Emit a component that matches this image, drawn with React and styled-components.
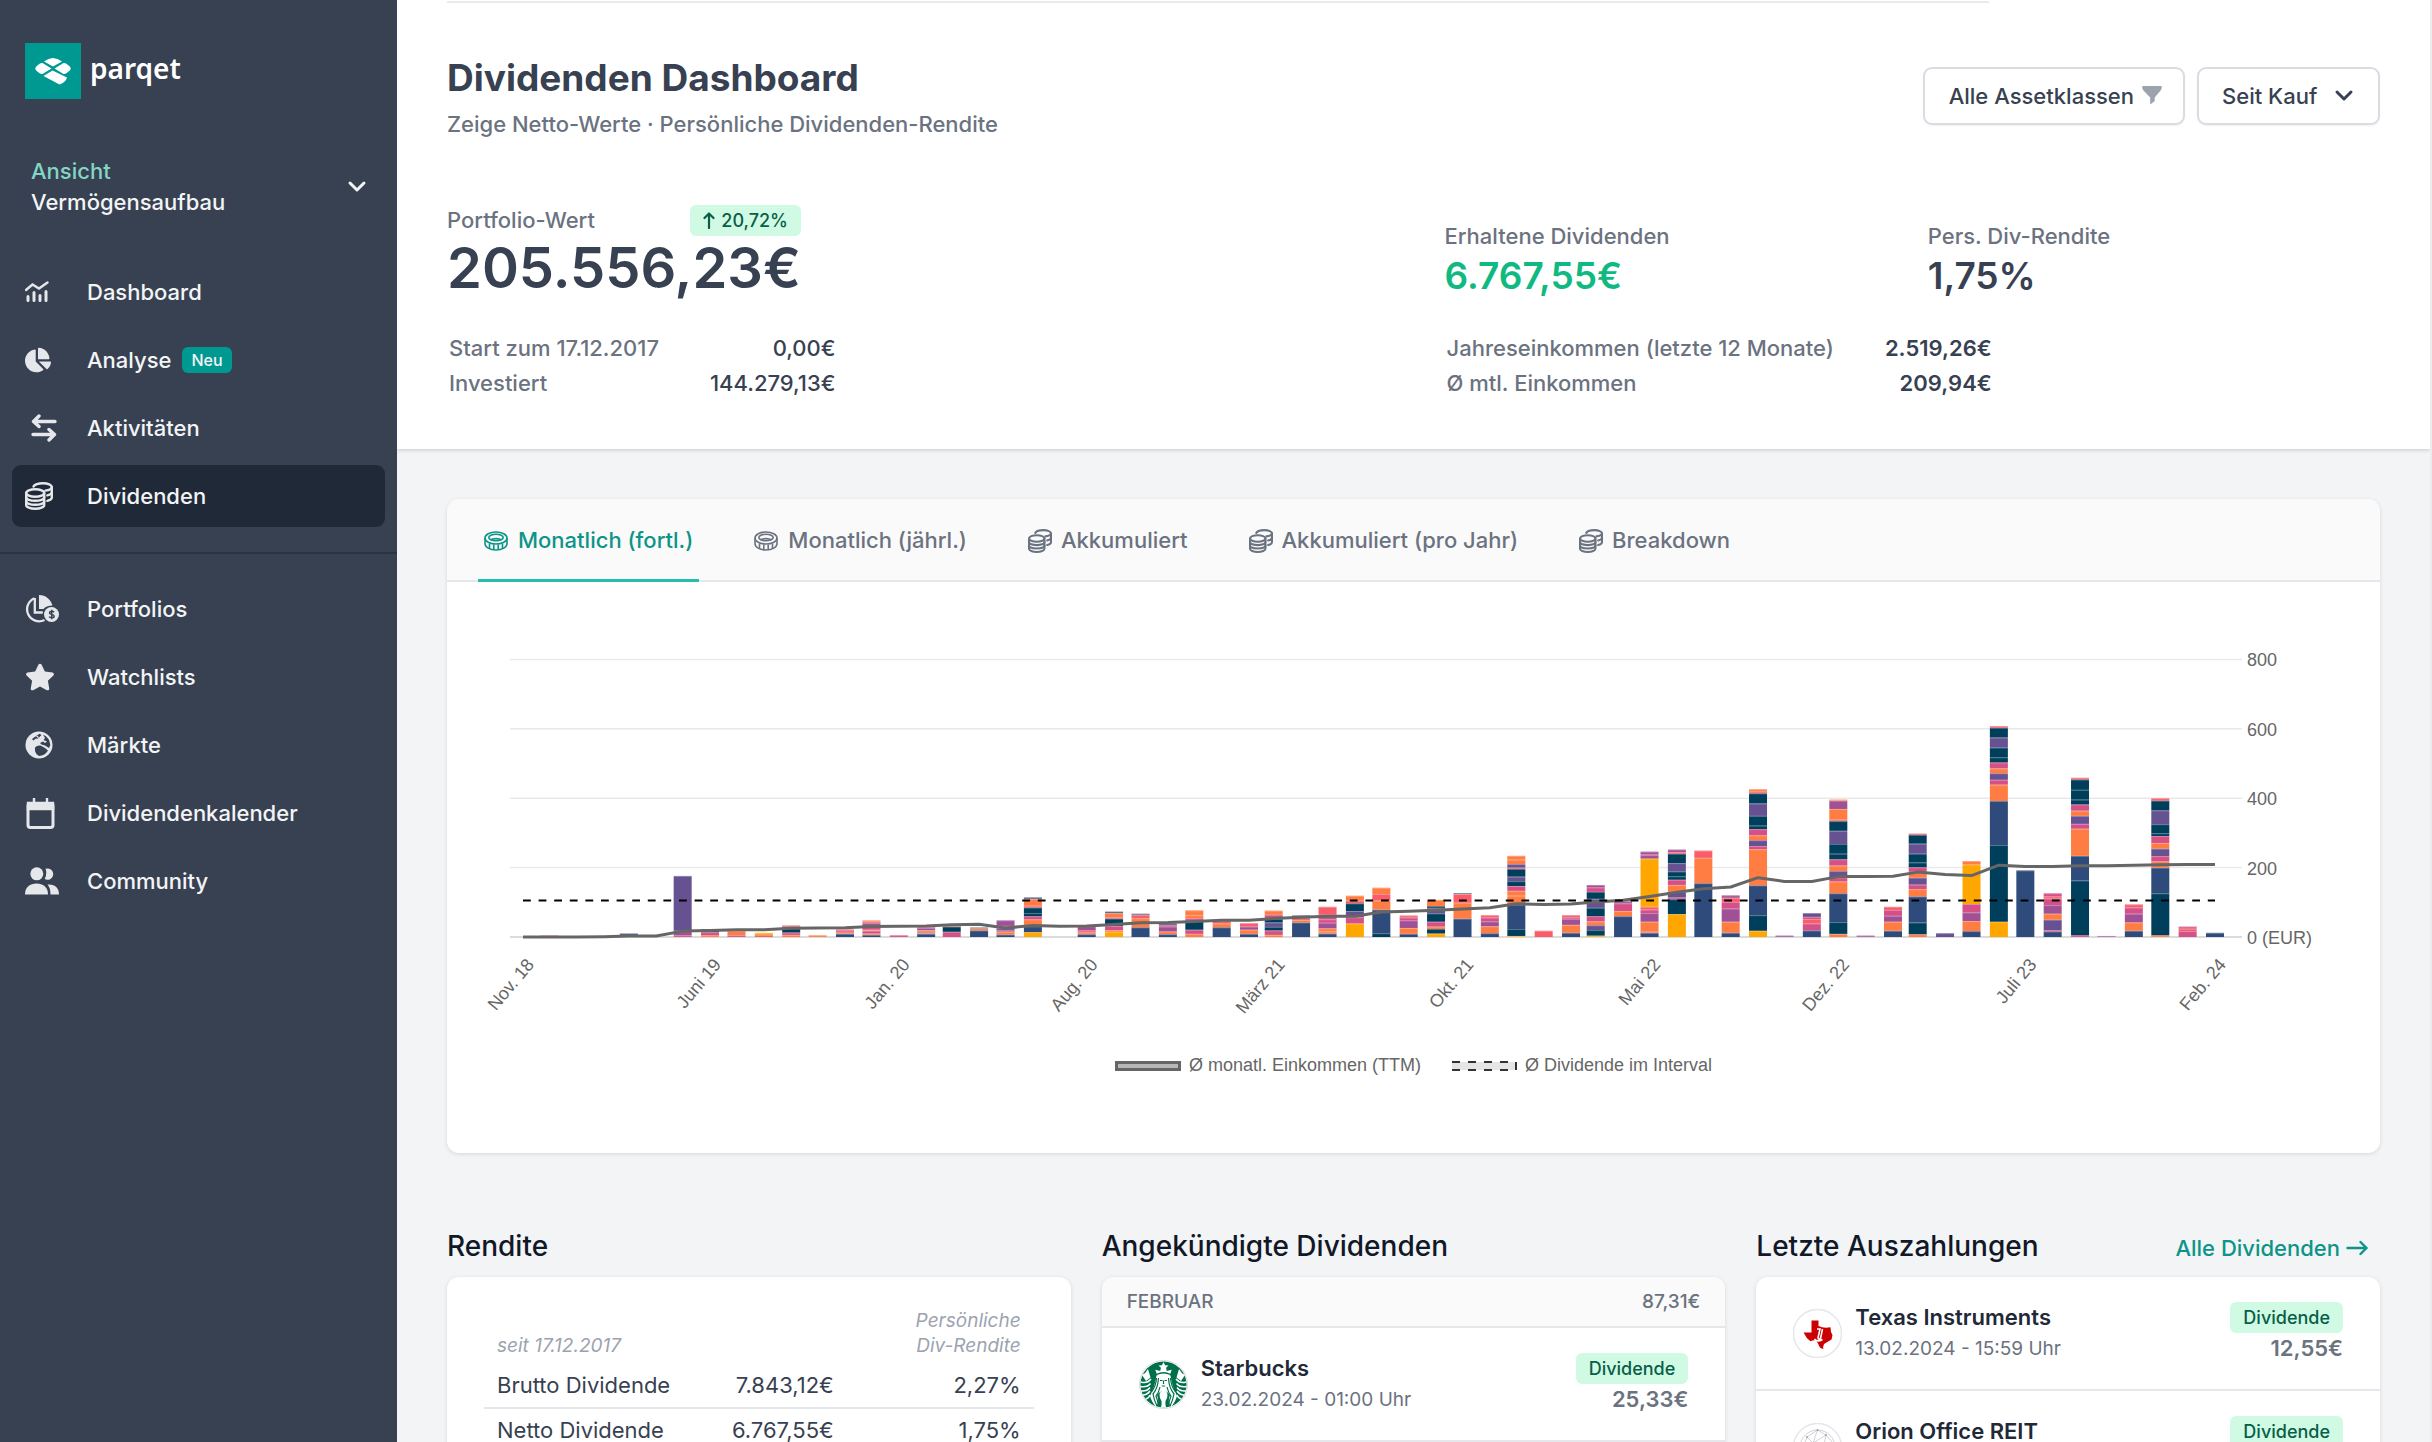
import React, { useState } from "react";
import styled, { createGlobalStyle } from "styled-components";
import { FaChartPie, FaStar } from "react-icons/fa";

const GlobalStyle = createGlobalStyle`
  * {
    box-sizing: border-box;
  }

  body {
    margin: 0;
    font-family: Inter, "Liberation Sans", sans-serif;
    font-size: 22px;
    line-height: 31px;
    color: #374151;
    background: #f3f4f6;
  }

  button, select {
    font: inherit;
    color: inherit;
  }

  h1, h2, p, dl, dd, ul {
    margin: 0;
    padding: 0;
  }
`;

const Page = styled.div`
  display: flex;
  height: 100vh;
  overflow: hidden;
`;

/* Sidebar */

const Sidebar = styled.aside`
  flex: 0 0 397px;
  padding-top: 43px;
  background: #374151;
  color: #f3f4f6;
  font-weight: 500;
`;

const Brand = styled.a`
  display: flex;
  align-items: center;
  gap: 9px;
  padding-left: 25px;
  color: #fff;
  font-family: "Noto Sans", sans-serif;
  font-size: 28px;
  font-weight: 600;
  text-decoration: none;

  span {
    padding-bottom: 6px;
  }
`;

const ViewSwitcher = styled.button`
  display: flex;
  align-items: center;
  justify-content: space-between;
  width: 100%;
  margin: 57px 0 43px;
  padding: 0 30px 0 31px;
  border: 0;
  background: none;
  text-align: left;
  font-weight: 500;
  cursor: pointer;
`;

const ViewLabel = styled.span`
  display: block;
  color: #83d5c5;
`;

const NavGroup = styled.nav`
  display: flex;
  flex-direction: column;
  gap: 6px;
  padding: 0 12px;

  & + & {
    margin-top: 25px;
    padding-top: 24px;
    border-top: 2px solid #2a3444;
  }
`;

const NavItem = styled.a`
  display: flex;
  align-items: center;
  height: 62px;
  padding-left: 13px;
  border-radius: 9px;
  background: ${(p) => (p.$active ? "#1f2937" : "transparent")};
  color: #f3f4f6;
  text-decoration: none;
`;

const NavIcon = styled.span`
  display: flex;
  width: 62px;
  padding-left: ${(p) => (p.$inset ? "6px" : "0")};
  color: #e5e7eb;
`;

const NewBadge = styled.span`
  margin-left: 11px;
  padding: 0 9px;
  border-radius: 6px;
  background: #009991;
  font-size: 16px;
  line-height: 26px;
`;

/* Header */

const Main = styled.main`
  flex: 1;
  min-width: 0;
  overflow-y: auto;
  scrollbar-width: none;
  border-right: 2px solid #eaecef;
`;

const Header = styled.header`
  padding: 1px 50px 48px;
  background: #fff;
  box-shadow: 0 1px 4px rgba(0, 0, 0, 0.18);
`;

const TopRule = styled.div`
  width: calc(80% - 4px);
  height: 2px;
  background: #e8eaed;
`;

const TitleBar = styled.div`
  display: flex;
  align-items: center;
  justify-content: space-between;
  margin: 52px 0 65px;
`;

const Title = styled.h1`
  font-size: 37px;
  line-height: 45px;
  font-weight: 700;
`;

const Subtitle = styled.p`
  margin-top: 9px;
  color: #6b7280;
  font-weight: 500;
`;

const Filters = styled.div`
  display: flex;
  gap: 12px;
  margin-bottom: 3px;
`;

const FilterButton = styled.button`
  display: flex;
  align-items: center;
  gap: 8px;
  height: 58px;
  padding: 0 21px 0 24px;
  border: 2px solid #d9dce1;
  border-radius: 9px;
  background: #fff;
  box-shadow: 0 1px 2px rgba(0, 0, 0, 0.06);
  font-weight: 500;
  cursor: pointer;
`;

const SelectBox = styled.label`
  display: grid;
  align-items: center;

  select,
  svg {
    grid-area: 1 / 1;
  }

  select {
    appearance: none;
    height: 58px;
    padding: 0 60px 0 23px;
    border: 2px solid #d9dce1;
    border-radius: 9px;
    background: #fff;
    box-shadow: 0 1px 2px rgba(0, 0, 0, 0.06);
    font-weight: 500;
  }

  svg {
    justify-self: end;
    margin-right: 26px;
    pointer-events: none;
  }
`;

const Stats = styled.div`
  display: grid;
  grid-template-columns: 1fr 1fr;
  column-gap: 62px;
  row-gap: 31px;
  align-items: end;
`;

const StatPair = styled.div`
  display: grid;
  grid-template-columns: 1fr 1fr;
  column-gap: 31px;
`;

const PortfolioValue = styled.div`
  justify-self: start;
`;

const StatLabel = styled.div`
  display: flex;
  justify-content: space-between;
  color: #6b7280;
  font-weight: 500;
`;

const StatValue = styled.div`
  font-size: ${(p) => (p.$large ? "56px" : "37px")};
  line-height: ${(p) => (p.$large ? "64px" : "48px")};
  font-weight: 600;
  color: ${(p) => (p.$positive ? "#10b981" : "#374151")};
`;

const Badge = styled.span`
  display: inline-flex;
  align-items: center;
  gap: 6px;
  padding: 0 13px;
  border-radius: 6px;
  background: #d1fae5;
  color: #065f46;
  font-size: 18px;
  line-height: 31px;
  font-weight: 500;
`;

const StatTable = styled.table`
  justify-self: start;
  border-collapse: collapse;

  th,
  td {
    padding: 2px 0;
    font-weight: 500;
  }

  th {
    padding-left: 2px;
    color: #6b7280;
    text-align: left;
  }

  td {
    padding-left: 51px;
    text-align: right;
    font-weight: ${(p) => (p.$strong ? 600 : 500)};
  }
`;

/* Content */

const Content = styled.div`
  padding: 50px 50px 0;
`;

const Card = styled.div`
  flex: 1;
  overflow: hidden;
  border-radius: 12px;
  background: #fff;
  box-shadow: 0 1px 4px rgba(0, 0, 0, 0.12);
`;

const Tabs = styled.div`
  display: flex;
  gap: 49px;
  height: 83px;
  padding-left: 31px;
  border-bottom: 2px solid #e5e7eb;
  background: #fafafa;
`;

const Tab = styled.button`
  display: flex;
  align-items: center;
  gap: 9px;
  height: 83px;
  padding: 3px 6px 0;
  border: 0;
  border-bottom: 3px solid ${(p) => (p.$active ? "#26bdad" : "transparent")};
  background: none;
  color: ${(p) => (p.$active ? "#0d9488" : "#6b7280")};
  font-weight: 500;
  cursor: pointer;
`;

const ChartSvg = styled.svg`
  display: block;
  width: 100%;
  height: auto;
  font-family: "Liberation Sans", Arial, sans-serif;
  font-size: 18px;
`;

const Legend = styled.ul`
  display: flex;
  justify-content: center;
  gap: 30px;
  padding: 7px 0 72px;
  list-style: none;
  color: #666;
  font-family: "Liberation Sans", Arial, sans-serif;
  font-size: 18px;
  line-height: 31px;

  li {
    display: flex;
    align-items: center;
    gap: 8px;
  }
`;

const Columns = styled.div`
  display: grid;
  grid-template-columns: repeat(3, 1fr);
  column-gap: 31px;
  margin-top: 72px;
`;

const Column = styled.section`
  display: flex;
  flex-direction: column;
  min-width: 0;
`;

const ColumnHead = styled.div`
  display: flex;
  align-items: baseline;
  justify-content: space-between;
  margin-bottom: 9px;
  padding-right: 12px;

  h2 {
    color: #111827;
    font-size: 28px;
    line-height: 43px;
    font-weight: 500;
  }

  a {
    display: flex;
    align-items: center;
    gap: 6px;
    color: #0d9488;
    font-weight: 500;
    text-decoration: none;
  }
`;

const YieldTable = styled.table`
  width: calc(100% - 74px);
  margin: 31px 37px;
  border-collapse: collapse;
  table-layout: fixed;

  thead th {
    padding: 0 13px 6px;
    vertical-align: bottom;
    color: #9ca3af;
    font-size: 19px;
    line-height: 25px;
    font-style: italic;
    font-weight: 400;
    text-align: left;
  }

  tbody th,
  td {
    padding: 6px 13px;
    border-bottom: 2px solid #e5e7eb;
    font-weight: 400;
    text-align: left;
    white-space: nowrap;
  }

  td,
  thead th:last-child {
    text-align: right;
  }
`;

const MonthHead = styled.div`
  display: flex;
  justify-content: space-between;
  padding: 9px 25px;
  border-bottom: 2px solid #e5e7eb;
  background: #fafafa;
  color: #6b7280;
  font-size: 19px;
  font-weight: 500;
`;

const PayoutRow = styled.div`
  display: flex;
  align-items: center;
  gap: 13px;
  padding: 25px 37px;
  border-bottom: 2px solid #e5e7eb;
`;

const PayoutName = styled.div`
  color: #1f2937;
  font-weight: 600;
`;

const PayoutDate = styled.div`
  color: #6b7280;
  font-size: 19px;
`;

const PayoutAmount = styled.div`
  display: flex;
  flex-direction: column;
  align-items: flex-end;
  margin-left: auto;
  color: #6b7280;
  font-weight: 600;
`;

/* Icons */

const ChevronDown = ({ color = "currentColor" }) => (
  <svg width="20" height="14" viewBox="0 0 20 14" fill="none" stroke={color} strokeWidth="3" strokeLinecap="round" strokeLinejoin="round">
    <path d="M3 3l7 7 7-7" />
  </svg>
);

const BrandMark = () => (
  <svg width="56" height="56" viewBox="0 0 56 56">
    <rect width="56" height="56" fill="#009991" />
    <g fill="#fff">
      <path d="M19 18.500Q28 11.500 37 18.500L28 23.500Z" />
      <path d="M17.500 20L26.500 25.500L17.500 31Q15.500 31.500 13 29Q7.500 25.500 13 22Q15.500 19.500 17.500 20Z" />
      <path d="M38.500 20L29.500 25.500L38.500 31Q40.500 31.500 43 29Q48.500 25.500 43 22Q40.500 19.500 38.500 20Z" />
      <path d="M27.500 27.500L42 34.500Q41 39 34.500 41.500L18.500 33Z" />
    </g>
  </svg>
);

const TrendIcon = () => (
  <svg width="24" height="22" viewBox="0 0 24 22" fill="none" stroke="currentColor" strokeWidth="3" strokeLinecap="round">
    <path d="M1 9L7.500 3.500L14 7.500L22.500 1.500" strokeWidth="2.400" />
    <path d="M3 15.500v4M9 11.500v8M15 14.500v5M21 10.500v9" />
  </svg>
);

const TransferIcon = () => (
  <svg width="26" height="28" viewBox="0 0 26 28" fill="none" stroke="currentColor" strokeWidth="3.400" strokeLinecap="round" strokeLinejoin="round">
    <path d="M24 7.500H3M8 2L2.500 7.500L8 12.500" />
    <path d="M2 20.500H23M18 15.500L23.500 20.500L18 26" />
  </svg>
);

const CoinsIcon = ({ size = 28 }) => (
  <svg width={size} height={size} viewBox="0 0 28 28" fill="none" stroke="currentColor" strokeWidth="2.400" strokeLinecap="round">
    <ellipse cx="10.200" cy="11" rx="9" ry="3.800" />
    <path d="M1.200 11v12c0 2.100 4 3.800 9 3.800s9-1.700 9-3.800V11" />
    <path d="M1.200 15.200c0 2.100 4 3.600 9 3.600s9-1.500 9-3.600M1.200 19.200c0 2.100 4 3.600 9 3.600s9-1.500 9-3.600" />
    <path d="M8.500 4.500C9.800 2.500 13.500 1.300 18 1.300c5 0 8.800 1.700 8.800 3.800v10.500c0 1.500-1.700 2.600-4.500 3.200" />
    <path d="M26.800 5c0 1.800-2.500 3.200-6.500 3.600M26.800 10.300c0 1.400-1.700 2.500-4.500 3.100" />
  </svg>
);

const CoinIcon = () => (
  <svg width="25" height="24" viewBox="0 0 25 24" fill="none" stroke="currentColor" strokeWidth="1.600">
    <ellipse cx="12" cy="9" rx="11" ry="6" />
    <ellipse cx="12" cy="8.500" rx="7.200" ry="3.300" />
    <path d="M1 9v5.500c0 3.600 4.900 6.500 11 6.500s11-2.900 11-6.500V9" />
    <path d="M5.500 14.500v5M9.800 15.500v5M14.200 15.500v5M18.500 14.500v5" />
    <path d="M6.500 11c2.500-1.800 8.500-1.800 11 0" />
  </svg>
);

const PortfolioIcon = () => (
  <svg width="34" height="28" viewBox="0 0 34 28" fill="none" stroke="currentColor" strokeWidth="2.300">
    <path d="M9.500 3.200A12 12 0 1 0 19.500 25" />
    <path d="M9.800 3v14.500h8" />
    <path d="M14 0C21 0 26 5 27.500 10.500Q21 10.500 18.500 14H14Z" fill="currentColor" stroke="none" />
    <circle cx="26.500" cy="19.500" r="7.500" fill="currentColor" stroke="none" />
    <path d="M29 17.200c-1.100-1.500-4.500-1.400-4.500.5 0 2.100 4.600 1.300 4.600 3.500 0 2-3.900 2-5 .4M26.700 14.800v9.400" stroke="#374151" strokeWidth="1.500" />
  </svg>
);

const GlobeIcon = () => (
  <svg width="28" height="28" viewBox="0 0 28 28">
    <circle cx="14" cy="14" r="13.500" fill="currentColor" />
    <g fill="#374151">
      <path d="M10 16.500Q12 14 15.500 14.500L20 17L23 19.500Q20 24.500 14 25Q10.500 23 10 20Z" />
      <path d="M18 3.600Q24.500 6.500 25.300 14L24 17L20 14.500L16.500 13.500L15 12L18 10.500L20 12L22 10.500L18.500 9L20 7Z" />
      <path d="M9 6.500L14.500 2.700L16.500 4L13 7.500L10.500 7.800L8.500 9.500L7 8Z" />
    </g>
    <path d="M11.500 5l2 1.500M17 8.500l2-1.500" stroke="currentColor" strokeWidth="1.400" />
  </svg>
);

const CalendarIcon = () => (
  <svg width="30" height="31" viewBox="0 0 30 31" fill="none" stroke="currentColor" strokeWidth="3">
    <rect x="3" y="5.500" width="25" height="24" rx="2.500" />
    <path d="M3 5h25v6H3zM9 5V0M22 5V0" fill="currentColor" strokeWidth="2.400" />
  </svg>
);

const PeopleIcon = () => (
  <svg width="34" height="28" viewBox="0 0 34 28" fill="currentColor">
    <circle cx="11.800" cy="6.800" r="6.500" />
    <path d="M20.500 1.800a5.700 5.700 0 1 1-.8 10.300q2.700-5.500.8-10.300Z" />
    <path d="M0 27.500C0 20 5 16.500 11.500 16.500S23 20 23 27.500Z" />
    <path d="M22.500 17.600C30 17 34 21 34 27.500H25.500Q25.500 21 22.500 17.600Z" />
  </svg>
);

const FunnelIcon = () => (
  <svg width="20" height="20" viewBox="0 0 20 20" fill="#9ca3af">
    <path d="M1 0h18q1 0 .9 1.500L19 4l-6.300 7.500V15l-4.500 3.500V11.500L1 4L.1 1.500Q0 0 1 0Z" />
  </svg>
);

const ArrowRight = () => (
  <svg width="22" height="18" viewBox="0 0 22 18" fill="none" stroke="currentColor" strokeWidth="2.400" strokeLinecap="round" strokeLinejoin="round">
    <path d="M1.500 8H20.500M14.500 2L20.500 8L14.500 14" />
  </svg>
);

const ArrowUp = () => (
  <svg width="12" height="17" viewBox="0 0 12 17" fill="none" stroke="currentColor" strokeWidth="2.200" strokeLinecap="round" strokeLinejoin="round">
    <path d="M6 16V1.500M1.500 6L6 1.500L10.500 6" />
  </svg>
);

const StarbucksLogo = () => (
  <svg width="49" height="49" viewBox="0 0 49 49">
    <circle cx="24.500" cy="24.500" r="24" fill="#fff" stroke="#d7dbd9" />
    <circle cx="24.500" cy="24.500" r="23" fill="#00704a" />
    <g fill="#fff">
      <path d="M24.500 2l1.600 3.200 3.400.3-2.400 2.300.7 3.200 5-1.300-2 5.300H18.200l-2-5.300 5 1.300.7-3.200-2.400-2.300 3.400-.3Z" />
      <path d="M17.500 15.500Q24.500 12 31.500 15.500Q33 26 38 36Q36 43 32 46.500Q28 42 31 35Q28 31 24.500 31Q21 31 18 35Q21 42 17 46.500Q13 43 11 36Q16 26 17.500 15.500Z" />
      <path d="M24.500 30q4 1.500 4 5t-2 6q-.5 3 .5 6.500h-5q1-3.500.5-6.500-2-2.500-2-6t4-5Z" />
      <path d="M3 15q4-2 6-6l2.500 8.500L7 21ZM46 15q-4-2-6-6l-2.500 8.500L42 21Z" />
    </g>
    <g fill="none" stroke="#fff" strokeWidth="1.500">
      <path d="M2 22q6 2 10-3M1.500 26.500q7 1 10-3M2 31q6 .5 9-3.500M4 35q4 0 7-4M7 39q3-1 4-4" />
      <path d="M47 22q-6 2-10-3M47.500 26.500q-7 1-10-3M47 31q-6 .5-9-3.500M45 35q-4 0-7-4M42 39q-3-1-4-4" />
    </g>
    <g fill="none" stroke="#00704a" strokeWidth="1.200">
      <path d="M19.500 18Q19 28 14 34q1 6 4 12M17.500 18Q17 26 12.500 32M29.500 18Q30 28 35 34q-1 6-4 12M31.500 18Q32 26 36.500 32" />
      <path d="M21 27Q20 32 17 36q2 5 2.500 10M28 27Q29 32 32 36q-2 5-2.500 10" />
      <path d="M21 20.500h2.500M25.500 20.500h2.500M24.500 20.500v3.500M22.800 26h3.400" />
    </g>
    <path d="M17.500 14.500Q24.500 11 31.500 14.500" fill="none" stroke="#00704a" strokeWidth="1.300" />
  </svg>
);

const TexasLogo = () => (
  <svg width="49" height="49" viewBox="0 0 49 49">
    <circle cx="24.500" cy="24.500" r="24" fill="#fff" stroke="#e5e7eb" strokeWidth="1.500" />
    <path d="M18.500 11.500h7v5.500q5 2.500 12 1.200l.5 4.800 1.500 3-1 4.500-7.500 4.500-1 3.500.5 1.500q-4-.5-5-4.500l-2.500-4.500-3.500.5-2 .8-3.500-3-3.500-5.800h8Z" fill="#cc0000" />
    <path d="M28.500 13l-1 3.500M24 20h3l-2 9q.5 2 3 .5M29.500 20l-2 9.500M21.500 30q3 3.500 8 .5" fill="none" stroke="#fff" strokeWidth="1.600" />
  </svg>
);

const OrionLogo = () => (
  <svg width="49" height="49" viewBox="0 0 49 49" fill="none">
    <circle cx="24.500" cy="24.500" r="24" fill="#fff" stroke="#e5e7eb" strokeWidth="1.500" />
    <g stroke="#c4c7cb" strokeWidth="0.800">
      <circle cx="24.500" cy="24.500" r="17.500" />
      <path d="M24.500 7L14 14L10 24L20 20L24.500 7L33 12L20 20L30 26L33 12L40 20L30 26L42 27M20 20L16 34L10 24M30 26L16 34L27 41L30 26L36 37M14 14L20 20" />
    </g>
    <g fill="#9ca3af">
      <circle cx="24.500" cy="7" r="1" />
      <circle cx="33" cy="12" r="1" />
      <circle cx="14" cy="14" r="1" />
      <circle cx="20" cy="20" r="1" />
    </g>
  </svg>
);

/* Data */

const mainNav = [
  { label: "Dashboard", icon: <TrendIcon /> },
  { label: "Analyse", icon: <FaChartPie size={26} />, badge: "Neu" },
  { label: "Aktivitäten", icon: <TransferIcon />, inset: true },
  { label: "Dividenden", icon: <CoinsIcon />, active: true },
];

const secondaryNav = [
  { label: "Portfolios", icon: <PortfolioIcon /> },
  { label: "Watchlists", icon: <FaStar size={30} /> },
  { label: "Märkte", icon: <GlobeIcon /> },
  { label: "Dividendenkalender", icon: <CalendarIcon /> },
  { label: "Community", icon: <PeopleIcon /> },
];

const tabs = [
  { label: "Monatlich (fortl.)", icon: <CoinIcon /> },
  { label: "Monatlich (jährl.)", icon: <CoinIcon /> },
  { label: "Akkumuliert", icon: <CoinsIcon size={24} /> },
  { label: "Akkumuliert (pro Jahr)", icon: <CoinsIcon size={24} /> },
  { label: "Breakdown", icon: <CoinsIcon size={24} /> },
];

const palette = {
  N: "#003f5c",
  B: "#2f4b7c",
  P: "#665191",
  V: "#a05195",
  M: "#d45087",
  R: "#f95d6a",
  O: "#ff7c43",
  Y: "#ffa600",
};

// Stacked payouts per month in EUR, bottom to top, starting with November 2018
const months = [
  "", "M4", "", "", "B10", "", "M5 V13 P158", "O5 M9 N9", "M5 O13", "R6 Y6",
  "O6 M7 N12 M7 O2", "O5", "B9 O4 M5 R4", "B6 O4 M8 O3 M10 V9 R4 O4", "M5",
  "B9 O4 P3 O4 V6 R3", "M15 N15 O3", "B19 O6 N2", "B7 O8 M4 P6 M7 V16",
  "Y14 B17 O20 M9 N9 N16 R5 O20 B4", "", "B8 O5 R6 V12", "Y15 O5 M12 N21 R4 O12 B4", "B28 O26 R10 B3",
  "B8 O8 V14 M5 B4", "O9 M12 N26 M7 O9 O14", "B28 O11 R7", "B9 O12 V9 R10", "O6 M13 N10 P13 N10 M12 O12", "B42 O7 R5 B8",
  "B10 O6 O9 V16 M10 M13 R23", "Y39 M18 P18 N22 R8 O14", "N11 B68 O26 R19 O18", "B9 O17 V22 M8 R6", "Y10 N13 O7 M14 N24 P16 N5 O18",
  "B53 O46 R25 N2", "B11 O20 V14 M11 R7", "Y3 N20 B70 O26 O14 M14 N14 P13 N22 R4 P10 O13 O11", "R18", "B12 O23 V17 M4 R7",
  "Y4 N16 P14 O11 M15 N24 P26 N20 M13 V7", "B60 O15 M22 V6", "B12 R3 O29 V25 M10 R8 Y139 V10 M3 V7",
  "Y66 N43 M5 P16 O20 M15 N10 N14 P24 N27 R5 V7", "B155 O73 R21", "B12 O32 V38 M19 R12 V7",
  "Y18 N45 B86 O104 M9 P17 O14 M18 N10 N28 P36 N29 R5 O7", "V4", "B19 M20 R13 M6 P11",
  "O9 N34 B83 O34 M12 P18 O16 M18 N16 N28 P38 N28 R4 O31 V24 O3", "V4", "B18 O26 V17 M17 R9",
  "O8 N34 B75 O21 M13 P20 O17 M13 N14 N25 P29 N25 R4", "P11", "B17 O29 V25 M24 Y114 O10",
  "Y44 N221 B127 O47 M14 P19 O14 M17 N15 N28 P29 N28 R5", "B192", "B16 M4 P30 O17 V25 M19 R6 M9",
  "M5 N158 B71 O78 M14 P23 O15 M18 N14 N28 N30 R5", "V3", "B18 O24 V25 M18 R9",
  "O5 N121 B74 O18 M15 P22 O16 M20 N8 N26 P40 N28 R7", "M17 R7 M6", "B12",
];

const ttm = [
  0, 0, 0, 1, 3, 3, 17, 19, 21, 21, 25, 26, 27, 30, 31, 32, 35, 37, 26, 33, 31, 32,
  36, 41, 42, 45, 48, 48, 53, 57, 60, 60, 72, 74, 77, 81, 84, 96, 94, 95, 101, 106,
  117, 129, 139, 144, 171, 160, 160, 174, 174, 175, 187, 180, 177, 207, 203, 203,
  205, 205, 207, 208, 209, 209,
];

const monthLabels = ["Nov. 18", "Juni 19", "Jan. 20", "Aug. 20", "März 21", "Okt. 21", "Mai 22", "Dez. 22", "Juli 23", "Feb. 24"];

const payouts = [
  { name: "Texas Instruments", date: "13.02.2024 - 15:59 Uhr", amount: "12,55€", logo: <TexasLogo /> },
  { name: "Orion Office REIT", date: "12.02.2024 - 16:14 Uhr", amount: "1,08€", logo: <OrionLogo /> },
];

/* Chart */

const CHART = { left: 76, right: 1768, base: 355, unit: 0.347 };

const firstDay = Date.UTC(2018, 10, 1);
const lastDay = Date.UTC(2024, 1, 1);

const xOf = (index) =>
  CHART.left + ((Date.UTC(2018, 10 + index, 1) - firstDay) / (lastDay - firstDay)) * (CHART.right - CHART.left);

const yOf = (value) => CHART.base - value * CHART.unit;

function StackedBar({ index, stack }) {
  let total = 0;

  return (
    <g>
      {stack.split(" ").filter(Boolean).map((part, i) => {
        const value = Number(part.slice(1));
        total += value;
        return (
          <g key={i}>
            <rect x={xOf(index) - 9} y={yOf(total)} width="18" height={value * CHART.unit} fill={palette[part[0]]} />
            <rect x={xOf(index) - 9} y={yOf(total)} width="18" height="1" fill="#fff" opacity="0.3" />
          </g>
        );
      })}
    </g>
  );
}

function DividendChart() {
  const line = ttm.map((value, i) => `${xOf(i)},${yOf(value)}`).join(" ");

  return (
    <ChartSvg viewBox="0 0 1933 461" role="img" aria-label="Dividenden pro Monat">
      {[0, 200, 400, 600, 800].map((value) => (
        <g key={value}>
          <path d={`M63 ${yOf(value)}H1795`} stroke={value ? "#e9e9e9" : "#cfcfcf"} strokeWidth="1.500" />
          <text x="1800" y={yOf(value) + 7} fill="#666">
            {value === 0 ? "0 (EUR)" : value}
          </text>
        </g>
      ))}
      {months.map((stack, i) => (
        <StackedBar key={i} index={i} stack={stack} />
      ))}
      <polyline points={line} fill="none" stroke="#666" strokeWidth="3" strokeLinejoin="round" />
      <path d={`M${CHART.left} ${yOf(105)}H${CHART.right}`} stroke="#000" strokeWidth="2" strokeDasharray="7.800 7.800" />
      {monthLabels.map((label, i) => (
        <text
          key={label}
          transform={`translate(${xOf(i * 7) + 12} ${CHART.base + 28}) rotate(-50)`}
          textAnchor="end"
          fill="#666"
        >
          {label}
        </text>
      ))}
    </ChartSvg>
  );
}

/* Page parts */

function NavLinks({ items }) {
  return (
    <NavGroup>
      {items.map((item) => (
        <NavItem href="#" key={item.label} $active={item.active}>
          <NavIcon $inset={item.inset}>{item.icon}</NavIcon>
          {item.label}
          {item.badge && <NewBadge>{item.badge}</NewBadge>}
        </NavItem>
      ))}
    </NavGroup>
  );
}

function Payout({ logo, name, date, amount }) {
  return (
    <PayoutRow>
      {logo}
      <div>
        <PayoutName>{name}</PayoutName>
        <PayoutDate>{date}</PayoutDate>
      </div>
      <PayoutAmount>
        <Badge>Dividende</Badge>
        {amount}
      </PayoutAmount>
    </PayoutRow>
  );
}

export default function App() {
  const [activeTab, setActiveTab] = useState(0);

  return (
    <Page>
      <GlobalStyle />
      <Sidebar>
        <Brand href="#">
          <BrandMark />
          <span>parqet</span>
        </Brand>
        <ViewSwitcher>
          <span>
            <ViewLabel>Ansicht</ViewLabel>
            Vermögensaufbau
          </span>
          <ChevronDown />
        </ViewSwitcher>
        <NavLinks items={mainNav} />
        <NavLinks items={secondaryNav} />
      </Sidebar>

      <Main>
        <Header>
          <TopRule />
          <TitleBar>
            <div>
              <Title>Dividenden Dashboard</Title>
              <Subtitle>Zeige Netto-Werte · Persönliche Dividenden-Rendite</Subtitle>
            </div>
            <Filters>
              <FilterButton>
                Alle Assetklassen
                <FunnelIcon />
              </FilterButton>
              <SelectBox>
                <select aria-label="Zeitraum" defaultValue="kauf">
                  <option value="kauf">Seit Kauf</option>
                </select>
                <ChevronDown />
              </SelectBox>
            </Filters>
          </TitleBar>

          <Stats>
            <PortfolioValue>
              <StatLabel>
                Portfolio-Wert
                <Badge>
                  <ArrowUp />
                  20,72%
                </Badge>
              </StatLabel>
              <StatValue $large>205.556,23€</StatValue>
            </PortfolioValue>
            <StatPair>
              <div>
                <StatLabel>Erhaltene Dividenden</StatLabel>
                <StatValue $positive>6.767,55€</StatValue>
              </div>
              <div>
                <StatLabel>Pers. Div-Rendite</StatLabel>
                <StatValue>1,75%</StatValue>
              </div>
            </StatPair>
            <StatTable>
              <tbody>
                <tr>
                  <th scope="row">Start zum 17.12.2017</th>
                  <td>0,00€</td>
                </tr>
                <tr>
                  <th scope="row">Investiert</th>
                  <td>144.279,13€</td>
                </tr>
              </tbody>
            </StatTable>
            <StatTable $strong>
              <tbody>
                <tr>
                  <th scope="row">Jahreseinkommen (letzte 12 Monate)</th>
                  <td>2.519,26€</td>
                </tr>
                <tr>
                  <th scope="row">Ø mtl. Einkommen</th>
                  <td>209,94€</td>
                </tr>
              </tbody>
            </StatTable>
          </Stats>
        </Header>

        <Content>
          <Card>
            <Tabs role="tablist">
              {tabs.map((tab, i) => (
                <Tab
                  key={tab.label}
                  role="tab"
                  aria-selected={i === activeTab}
                  $active={i === activeTab}
                  onClick={() => setActiveTab(i)}
                >
                  {tab.icon}
                  {tab.label}
                </Tab>
              ))}
            </Tabs>
            <DividendChart />
            <Legend>
              <li>
                <svg width="66" height="10" viewBox="0 0 66 10">
                  <rect x="1.500" y="1.500" width="63" height="7" fill="#b8b8b8" stroke="#666" strokeWidth="3" />
                </svg>
                Ø monatl. Einkommen (TTM)
              </li>
              <li>
                <svg width="66" height="10" viewBox="0 0 66 10">
                  <rect x="1" y="1" width="64" height="8" fill="#e5e5e5" stroke="#333" strokeWidth="2" strokeDasharray="8 8" />
                </svg>
                Ø Dividende im Interval
              </li>
            </Legend>
          </Card>

          <Columns>
            <Column>
              <ColumnHead>
                <h2>Rendite</h2>
              </ColumnHead>
              <Card>
                <YieldTable>
                  <colgroup>
                    <col width="38%" />
                    <col width="28%" />
                    <col width="34%" />
                  </colgroup>
                  <thead>
                    <tr>
                      <th scope="col">seit 17.12.2017</th>
                      <th scope="col" aria-label="Betrag" />
                      <th scope="col">
                        Persönliche
                        <br />
                        Div-Rendite
                      </th>
                    </tr>
                  </thead>
                  <tbody>
                    <tr>
                      <th scope="row">Brutto Dividende</th>
                      <td>7.843,12€</td>
                      <td>2,27%</td>
                    </tr>
                    <tr>
                      <th scope="row">Netto Dividende</th>
                      <td>6.767,55€</td>
                      <td>1,75%</td>
                    </tr>
                  </tbody>
                </YieldTable>
              </Card>
            </Column>

            <Column>
              <ColumnHead>
                <h2>Angekündigte Dividenden</h2>
              </ColumnHead>
              <Card>
                <MonthHead>
                  <span>FEBRUAR</span>
                  <span>87,31€</span>
                </MonthHead>
                <Payout name="Starbucks" date="23.02.2024 - 01:00 Uhr" amount="25,33€" logo={<StarbucksLogo />} />
              </Card>
            </Column>

            <Column>
              <ColumnHead>
                <h2>Letzte Auszahlungen</h2>
                <a href="#">
                  Alle Dividenden
                  <ArrowRight />
                </a>
              </ColumnHead>
              <Card>
                {payouts.map((payout) => (
                  <Payout key={payout.name} {...payout} />
                ))}
              </Card>
            </Column>
          </Columns>
        </Content>
      </Main>
    </Page>
  );
}
